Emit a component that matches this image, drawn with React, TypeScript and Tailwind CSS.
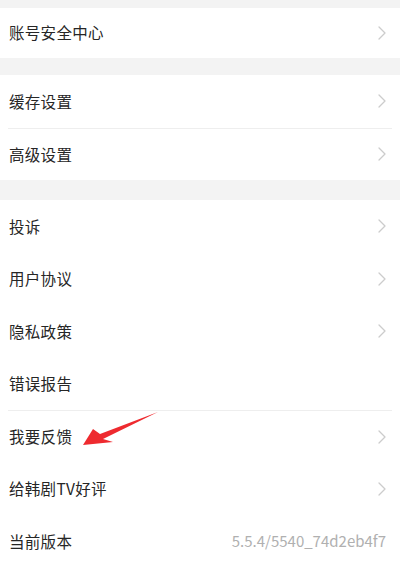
import React from "react";

const font = {
  fontFamily: '"Noto Sans CJK SC", "Noto Sans", sans-serif',
};

function Chevron() {
  return (
    <svg width="8" height="14" viewBox="0 0 8 14" fill="none" className="shrink-0">
      <path d="M1 1l6 6-6 6" stroke="#cccccc" strokeWidth="1.3" strokeLinecap="round" strokeLinejoin="round" />
    </svg>
  );
}

interface RowProps {
  label: string;
  value?: string;
  arrow?: boolean;
  divider?: boolean;
  tall?: boolean;
}

function Row({ label, value, arrow = true, divider = false, tall = true }: RowProps) {
  return (
    <div>
      {divider && <div className="mx-[8px] h-px bg-[#eeeeee]" />}
      <div
        className={`flex items-center justify-between pl-[9px] pr-[14px] ${
          tall ? (divider ? "h-[51.5px]" : "h-[52.5px]") : "h-[50px]"
        }`}
      >
        <span className="text-[15.5px] text-[#262626] tracking-[0.3px]">{label}</span>
        {value && <span className="text-[15px] text-[#b0b0b0]">{value}</span>}
        {arrow && <Chevron />}
      </div>
    </div>
  );
}

export default function App() {
  return (
    <div className="relative w-[400px] h-[563px] overflow-hidden bg-[#f3f3f3]" style={font}>
      <div className="h-[8px]" />
      <div className="bg-white">
        <Row label="账号安全中心" tall={false} />
      </div>
      <div className="h-[17px]" />
      <div className="bg-white">
        <Row label="缓存设置" />
        <Row label="高级设置" divider />
      </div>
      <div className="h-[20px]" />
      <div className="bg-white">
        <Row label="投诉" />
        <Row label="用户协议" />
        <Row label="隐私政策" />
        <Row label="错误报告" arrow={false} />
        <Row label="我要反馈" divider />
        <Row label="给韩剧TV好评" />
        <Row label="当前版本" value="5.5.4/5540_74d2eb4f7" arrow={false} />
      </div>

      {/* red pointer arrow drawn over the list */}
      <svg className="absolute left-0 top-0 pointer-events-none" width="400" height="563">
        <polygon
          points="83,445 93,429 100,434 158,412 103,439 113,442"
          fill="#ee2a2f"
        />
      </svg>
    </div>
  );
}
